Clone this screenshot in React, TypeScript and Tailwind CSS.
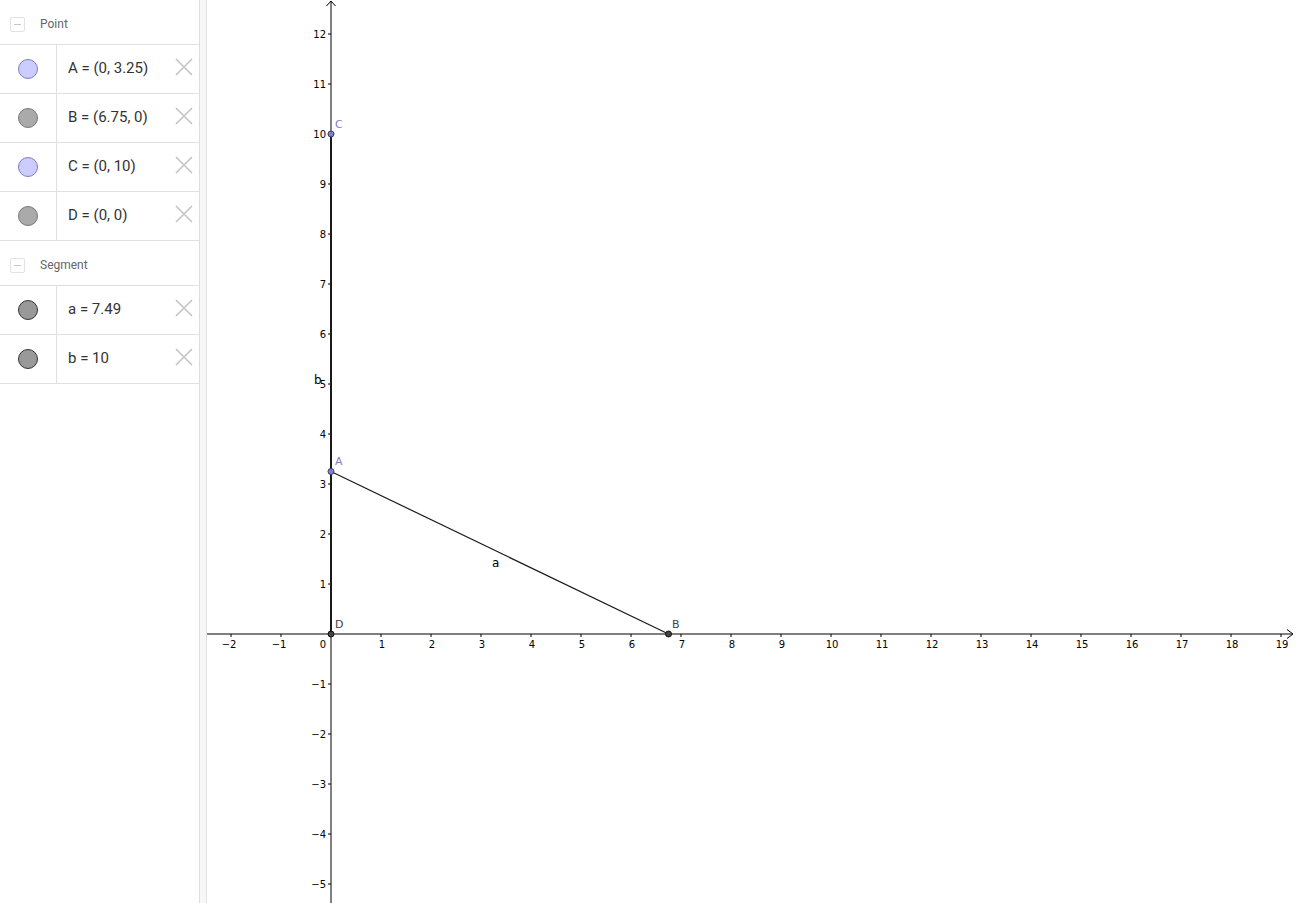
import React from 'react';

type Row = { label: string; kind: 'free' | 'dep' | 'seg' };

const points: Row[] = [
  { label: 'A = (0, 3.25)', kind: 'free' },
  { label: 'B = (6.75, 0)', kind: 'dep' },
  { label: 'C = (0, 10)', kind: 'free' },
  { label: 'D = (0, 0)', kind: 'dep' },
];

const segments: Row[] = [
  { label: 'a = 7.49', kind: 'seg' },
  { label: 'b = 10', kind: 'seg' },
];

const Marble = ({ kind }: { kind: Row['kind'] }) => {
  if (kind === 'free') return <div className="h-[20px] w-[20px] rounded-full border border-[#7d7dc8] bg-[#ccccff]" />;
  if (kind === 'dep') return <div className="h-[20px] w-[20px] rounded-full border border-[#777] bg-[#aaaaaa]" />;
  return <div className="h-[20px] w-[20px] rounded-full border border-[#333] bg-[#999999]" />;
};

const CloseIcon = () => (
  <svg width="18" height="18" viewBox="0 0 18 18" className="shrink-0">
    <path d="M1 1 L17 17 M17 1 L1 17" stroke="#c4c4c4" strokeWidth="1.6" />
  </svg>
);

const Header = ({ title }: { title: string }) => (
  <div className="flex h-[45px] items-center border-b border-[#e0e0e0] pt-[4px] pl-[10px]">
    <div className="flex h-[15px] w-[15px] items-center justify-center rounded-[2px] border border-[#e2e2e2]">
      <div className="h-px w-[7px] bg-[#c8c8c8]" />
    </div>
    <span className="ml-[15px] text-[12px] text-[#666]">{title}</span>
  </div>
);

const Item = ({ row }: { row: Row }) => (
  <div className="flex h-[49px] border-b border-[#e0e0e0]">
    <div className="flex w-[57px] shrink-0 items-center justify-center border-r border-[#e0e0e0]">
      <Marble kind={row.kind} />
    </div>
    <div className="flex flex-1 items-center pb-[2px] pl-[11px] pr-[6px]">
      <span className="flex-1 text-[15px] whitespace-pre text-[#333]">{row.label}</span>
      <div className="-mt-[2px]">
        <CloseIcon />
      </div>
    </div>
  </div>
);

const OX = 331;
const OY = 634;
const U = 50;

const Canvas = () => {
  const xs: number[] = [];
  for (let i = -2; i <= 19; i++) if (i !== 0) xs.push(i);
  const ys: number[] = [];
  for (let i = -5; i <= 12; i++) if (i !== 0) ys.push(i);
  const lab = (n: number) => (n < 0 ? `\u2212${-n}` : `${n}`);
  const A = { x: OX, y: OY - 3.25 * U };
  const B = { x: OX + 6.75 * U, y: OY };
  const C = { x: OX, y: OY - 10 * U };
  return (
    <svg width="1089" height="903" viewBox="207 0 1089 903" className="block font-['DejaVu_Sans',sans-serif] text-[10px]">
      <rect x="207" y="0" width="1089" height="903" fill="#fff" />
      {/* axes */}
      <line x1="207" y1={OY} x2="1292" y2={OY} stroke="#000" strokeWidth="1" />
      <path d="M1287 629.5 L1293 634 L1287 638.5" fill="none" stroke="#000" strokeWidth="1" />
      <line x1={OX} y1="903" x2={OX} y2="1" stroke="#000" strokeWidth="1" />
      <path d="M326.5 6 L331 1 L335.5 6" fill="none" stroke="#000" strokeWidth="1" />
      {xs.map((i) => (
        <g key={'x' + i}>
          <line x1={OX + i * U} y1={OY} x2={OX + i * U} y2={OY + 3} stroke="#000" />
          <text x={OX + i * U + (i < 0 ? -2 : 1)} y={OY + 14} textAnchor="middle" fill="#000">
            {lab(i)}
          </text>
        </g>
      ))}
      <text x={OX - 8} y={OY + 14} textAnchor="middle" fill="#000">
        0
      </text>
      {ys.map((i) => (
        <g key={'y' + i}>
          <line x1={OX - 3} y1={OY - i * U} x2={OX} y2={OY - i * U} stroke="#000" />
          <text x={OX - 5} y={OY - i * U + 4} textAnchor="end" fill="#000">
            {lab(i)}
          </text>
        </g>
      ))}
      {/* segments */}
      <line x1={A.x} y1={A.y} x2={B.x} y2={B.y} stroke="#1a1a1a" strokeWidth="1.2" />
      <line x1={OX} y1={OY} x2={C.x} y2={C.y} stroke="#1a1a1a" strokeWidth="2" />
      <text x="492" y="567" fill="#000" className="text-[12px]">a</text>
      <text x="314" y="384" fill="#000" className="text-[12px]">b</text>
      {/* points */}
      <circle cx={C.x} cy={C.y} r="3" fill="#7f7fcc" stroke="#3c3c66" strokeWidth="1" />
      <circle cx={A.x} cy={A.y} r="3" fill="#7f7fcc" stroke="#3c3c66" strokeWidth="1" />
      <circle cx={OX} cy={OY} r="3" fill="#444" stroke="#111" strokeWidth="1" />
      <circle cx={B.x} cy={B.y} r="3" fill="#444" stroke="#111" strokeWidth="1" />
      <text x="335" y="128" fill="#7f7fcc" className="text-[11px]">C</text>
      <text x="335" y="465" fill="#7f7fcc" className="text-[11px]">A</text>
      <text x="335" y="628" fill="#444" className="text-[11px]">D</text>
      <text x="672" y="628" fill="#444" className="text-[11px]">B</text>
    </svg>
  );
};

export default function App() {
  return (
    <div className="flex h-[903px] w-[1296px] overflow-hidden bg-white font-['Roboto','Liberation_Sans',sans-serif]">
      <div className="w-[200px] shrink-0 border-r border-[#dcdcdc]">
        <Header title="Point" />
        {points.map((r) => (
          <Item key={r.label} row={r} />
        ))}
        <Header title="Segment" />
        {segments.map((r) => (
          <Item key={r.label} row={r} />
        ))}
      </div>
      <div className="w-[7px] shrink-0 border-r border-[#e2e2e2] bg-[#f7f7f7]" />
      <Canvas />
    </div>
  );
}
